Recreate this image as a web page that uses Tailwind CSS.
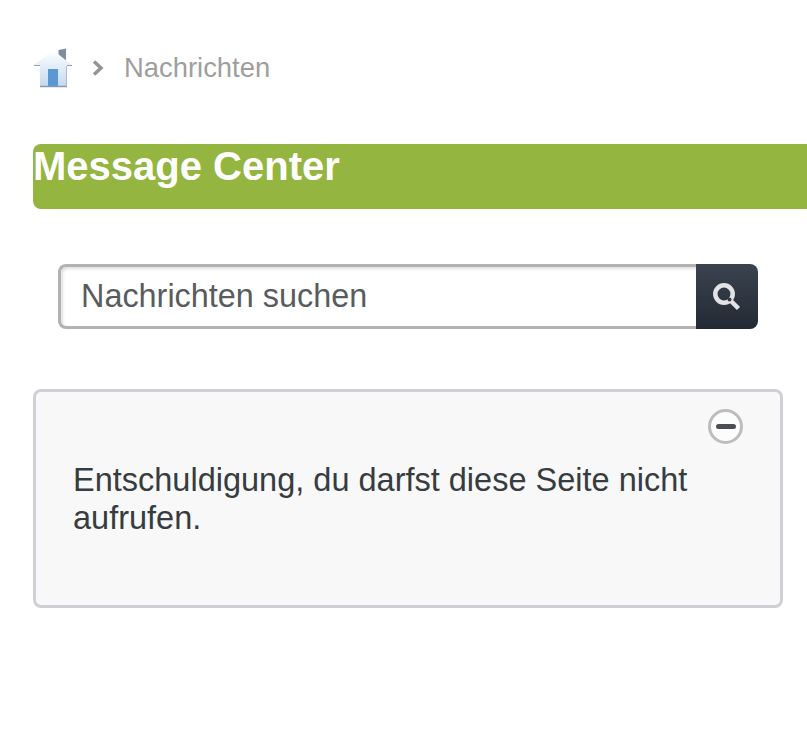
<!DOCTYPE html>
<html lang="de">
<head>
    <meta charset="UTF-8">
    <meta name="viewport" content="width=device-width, initial-scale=1.0">
    <title>Nachrichten</title>
    <script src="https://cdn.jsdelivr.net/npm/@tailwindcss/browser@4"></script>
</head>
<body class="bg-white font-['Liberation_Sans',Arial,sans-serif] overflow-hidden h-[748px]">
    <!-- breadcrumb -->
    <nav class="flex items-center h-10 mt-12 ml-[33px]">
        <svg class="w-10 h-10" viewBox="0 0 40 40" aria-label="Home">
            <defs>
                <linearGradient id="roof" x1="0" y1="0" x2="0" y2="1">
                    <stop offset="0" stop-color="#ffffff"/>
                    <stop offset="1" stop-color="#c3daf1"/>
                </linearGradient>
            </defs>
            <path d="M25.500 2 33 0.500v13l-7.500-6z" fill="#7f8d9c"/>
            <path d="M7 17.500V38h26.500V17.500h6L20 2 0.500 17.500z" fill="url(#roof)"/>
            <path d="M1 17.500h6M34 17.500h5" stroke="#8fa0b0" stroke-width="1"/>
            <path d="M7 38.500h27" stroke="#8c9aa8" stroke-width="1.500"/>
            <path d="M33.500 18v20" stroke="#a9bccf" stroke-width="1"/>
            <rect x="15" y="21" width="10" height="17" fill="#5b97d2"/>
        </svg>
        <svg class="w-4 h-5 ml-[18px]" viewBox="0 0 16 20"><path d="M3 3.500 10 10l-7 6.500" fill="none" stroke="#949494" stroke-width="3.500"/></svg>
        <span class="ml-[17px] text-[27.400px] leading-10 text-[#9e9e9e]">Nachrichten</span>
    </nav>

    <!-- title bar -->
    <div class="mt-[56px] ml-[33px] h-[65px] bg-[#94b53f] rounded-l-lg">
        <h1 class="text-[40px] leading-[44px] font-bold text-white">Message Center</h1>
    </div>

    <!-- search -->
    <form class="flex mt-[55px] ml-[58px] w-[700px] h-[65px]">
        <div class="flex-1 flex items-center pl-5 bg-white border-[3px] border-r-0 border-[#b2b2b2] rounded-l-lg shadow-[inset_2px_2px_3px_rgba(0,0,0,0.12)]">
            <span class="text-[32.400px] text-[#585c5e]">Nachrichten suchen</span>
        </div>
        <button type="button" class="w-[62px] flex items-center justify-center rounded-r-lg bg-linear-to-b from-[#3b4350] to-[#232a33]">
            <svg class="w-7 h-7" viewBox="0 0 28 28">
                <circle cx="11" cy="11" r="8.700" fill="none" stroke="#e3e3e3" stroke-width="4.500"/>
                <path d="M18 18 25.500 25.500" stroke="#e3e3e3" stroke-width="4.500"/>
                <circle cx="16.500" cy="16.500" r="2" fill="#333a45"/>
            </svg>
        </button>
    </form>

    <!-- message box -->
    <section class="relative mt-[60px] mx-[33px] w-[750px] h-[219px] bg-[#f8f8f8] border-[3px] border-[#cfd0d5] rounded-lg pt-[69px] pl-[37px] pr-8">
        <div class="absolute top-[17px] right-[37px] w-[35px] h-[35px] rounded-full border-[3px] border-[#bdbdbd] bg-white/60 flex items-center justify-center">
            <span class="w-5 h-[5px] rounded-full bg-[#4b4f53]"></span>
        </div>
        <p class="text-[32.500px] leading-[38px] text-[#363c3f]">Entschuldigung, du darfst diese Seite nicht aufrufen.</p>
    </section>
</body>
</html>
